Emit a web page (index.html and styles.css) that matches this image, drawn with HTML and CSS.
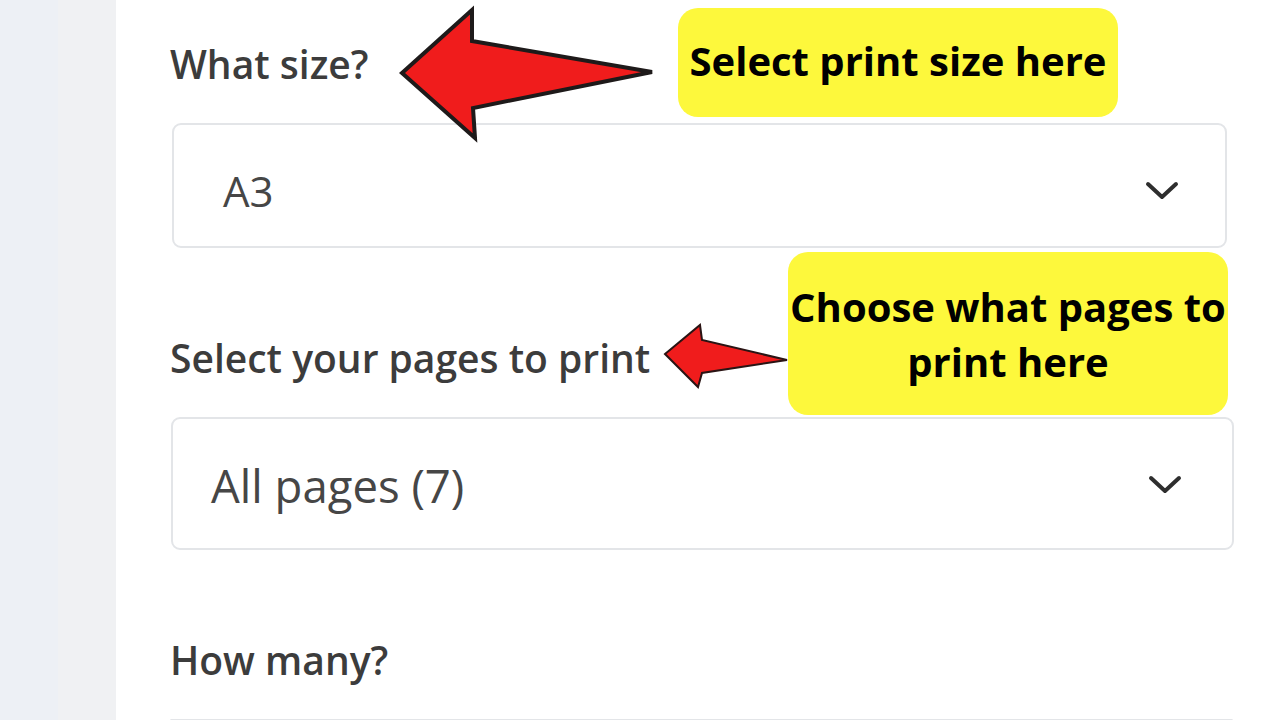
FILE: index.html
```html
<!DOCTYPE html>
<html lang="en">
<head>
<meta charset="utf-8">
<title>Print options</title>
<link rel="stylesheet" href="styles.css">
</head>
<body>
<div class="app">
  <aside class="sidebar">
    <div class="rail"></div>
    <div class="rail rail-inner"></div>
  </aside>
  <main class="panel">
    <section class="field">
      <div class="label">What size?</div>
      <div class="select select-size">
        <span class="value">A3</span>
        <svg class="chevron" viewBox="0 0 34 20" width="34" height="20"><path d="M3 3 L17 16 L31 3" fill="none" stroke="#2e2e2e" stroke-width="4" stroke-linecap="round" stroke-linejoin="round"/></svg>
      </div>
    </section>
    <section class="field">
      <div class="label">Select your pages to print</div>
      <div class="select select-pages">
        <span class="value value-pages">All pages (7)</span>
        <svg class="chevron" viewBox="0 0 34 20" width="34" height="20"><path d="M3 3 L17 16 L31 3" fill="none" stroke="#2e2e2e" stroke-width="4" stroke-linecap="round" stroke-linejoin="round"/></svg>
      </div>
    </section>
    <section class="field field-last">
      <div class="label">How many?</div>
      <div class="select select-qty"></div>
    </section>
  </main>
</div>

<div class="callout callout-size">Select print size here</div>
<div class="callout callout-pages">Choose what pages to<br>print here</div>

<svg class="arrow arrow-size" viewBox="396 4 262 140" width="262" height="140">
  <polygon points="402,73 472,10 472,41 652,72 473,108 475,138" fill="#f01c1c" stroke="#1e1a1a" stroke-width="4" stroke-linejoin="miter"/>
</svg>
<svg class="arrow arrow-pages" viewBox="660 320 132 72" width="132" height="72">
  <polygon points="665,354 700,325 702,340 787,360 702,373 698,387" fill="#f01c1c" stroke="#2a1414" stroke-width="2"/>
</svg>
</body>
</html>
```

FILE: styles.css
```css
* { box-sizing: border-box; }

html, body {
  margin: 0;
  padding: 0;
  width: 1280px;
  height: 720px;
  overflow: hidden;
  background: #ffffff;
  font-family: "Open Sans", "Liberation Sans", sans-serif;
}

.app {
  display: flex;
  height: 720px;
  overflow: hidden;
}

.sidebar {
  width: 116px;
  flex: none;
  display: flex;
}

.rail {
  flex: 1;
  background: #edf0f5;
}

.rail-inner {
  background: #f0f1f3;
}

.panel {
  flex: 1;
  padding: 40px 0 0 54px;
  overflow: hidden;
}

.field {
  margin-bottom: 86px;
}

.field-last {
  margin-bottom: 0;
}

.label {
  font-size: 39px;
  line-height: 48px;
  font-weight: 600;
  color: #3c3c3c;
  margin-bottom: 35px;
  white-space: nowrap;
}

.select {
  display: flex;
  align-items: center;
  justify-content: space-between;
  border: 2px solid #e3e5e8;
  border-radius: 9px;
  background: #ffffff;
}

.select-size {
  margin-left: 2px;
  width: 1055px;
  height: 125px;
  padding: 10px 46px 0 49px;
}

.select-pages {
  margin-left: 1px;
  width: 1063px;
  height: 133px;
  padding: 2px 50px 0 38px;
}

.select-qty {
  width: 1063px;
  height: 2px;
  border-bottom: none;
  border-radius: 9px 9px 0 0;
}

.value {
  font-size: 42px;
  color: #464646;
}

.value-pages {
  font-size: 45.5px;
}

.chevron {
  display: block;
}

.callout {
  position: absolute;
  background: #fdf83c;
  border-radius: 20px;
  color: #000000;
  font-weight: 700;
  font-size: 40px;
  line-height: 55px;
  text-align: center;
  white-space: nowrap;
  display: flex;
  align-items: center;
  justify-content: center;
}

.callout-size {
  left: 678px;
  top: 8px;
  width: 440px;
  height: 109px;
  padding-bottom: 4px;
}

.callout-pages {
  left: 788px;
  top: 252px;
  width: 440px;
  height: 163px;
}

.arrow {
  position: absolute;
  display: block;
}

.arrow-size {
  left: 396px;
  top: 4px;
}

.arrow-pages {
  left: 660px;
  top: 320px;
}
```
